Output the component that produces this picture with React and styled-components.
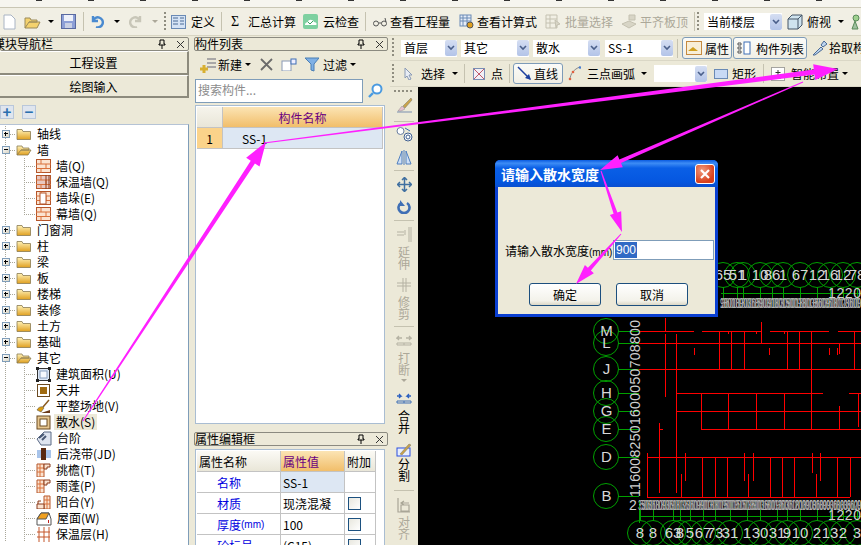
import React from 'react'
import styled, { createGlobalStyle } from 'styled-components'

const Global = createGlobalStyle`
  html, body { margin: 0; padding: 0; background: #ece9d8; }
  body { font-family: 'Noto Sans CJK SC', 'Liberation Sans', sans-serif; font-size: 12px; color: #000; }
  * { box-sizing: border-box; }
`

const Page = styled.div`
  position: relative;
  width: 861px;
  height: 545px;
  overflow: hidden;
  background: #ece9d8;
  display: flex;
  flex-direction: column;
`
const TopStrip = styled.div`
  height: 8px;
  flex: none;
  background: #f6f5ef;
  border-bottom: 1px solid #c9c6b4;
  background-image: repeating-linear-gradient(90deg, transparent 0 36px, #333 36px 42px, transparent 42px 52px);
  background-size: 100% 1px;
  background-repeat: no-repeat;
`
const MainBar = styled.div`
  height: 28px;
  flex: none;
  display: flex;
  align-items: center;
  background: #f1efe4;
  border-bottom: 1px solid #d8d5c3;
  padding-left: 3px;
  white-space: nowrap;
`
const Workspace = styled.div`
  flex: 1;
  min-height: 0;
  display: flex;
`
const Tool = styled.div`
  display: flex;
  align-items: center;
  flex: none;
  height: 22px;
  line-height: 22px;
  gap: ${(p) => p.$gap ?? 5}px;
  margin-left: ${(p) => p.$ml ?? 0}px;
  color: ${(p) => (p.$off ? '#aca899' : '#000')};
`
const Caret = styled.span`
  flex: none;
  width: 0;
  height: 0;
  border-left: 3px solid transparent;
  border-right: 3px solid transparent;
  border-top: 3px solid ${(p) => (p.$off ? '#aca899' : '#000')};
  margin-left: ${(p) => p.$ml ?? 6}px;
`
const Sep = styled.span`
  flex: none;
  width: 1px;
  height: 19px;
  background: #c5c2b0;
  margin: 0 ${(p) => p.$m ?? 7}px;
`
const Grip = styled.span`
  flex: none;
  width: 2px;
  height: 20px;
  margin: 0 ${(p) => p.$mr ?? 6}px 0 ${(p) => p.$ml ?? 3}px;
  background: repeating-linear-gradient(180deg, #8f8d80 0 2px, transparent 2px 4px);
`
const LeftDock = styled.aside`
  width: 189px;
  flex: none;
  display: flex;
  flex-direction: column;
  overflow: hidden;
  padding-top: 1px;
`
const MidDock = styled.aside`
  width: 194px;
  flex: none;
  margin-left: 5px;
  display: flex;
  flex-direction: column;
  padding-top: 1px;
`
const PaneTitle = styled.div`
  height: 14px;
  flex: none;
  display: flex;
  align-items: center;
  border: 1px solid #8b8a80;
  border-radius: 2px;
  background: #ece9d8;
  line-height: 12px;
  padding-right: 3px;
  span.t { flex: 1; white-space: nowrap; margin-left: ${(p) => p.$shift ?? 0}px; }
`
const NavButton = styled.div`
  height: ${(p) => p.$h}px;
  flex: none;
  display: flex;
  align-items: center;
  justify-content: center;
  background: #ece9d8;
  border-top: 1px solid #fff;
  border-right: 2px solid #8d8b7d;
  border-bottom: 2px solid #8d8b7d;
`
const TreeTools = styled.div`
  height: 27px;
  flex: none;
  display: flex;
  align-items: center;
  gap: 8px;
`
const Square = styled.span`
  width: 14px;
  height: 14px;
  border: 1px solid #b9c7da;
  background: #dfe5ee;
  display: flex;
  align-items: center;
  justify-content: center;
  color: #2a6fae;
  font-size: 15px;
  font-weight: 700;
  line-height: 12px;
`
const Tree = styled.div`
  flex: 1;
  background: #fff;
  border-top: 1px solid #b5c3d5;
  border-right: 1px solid #7f9db9;
  padding-top: 1px;
  overflow: hidden;
  margin-top: -1px;
`
const TreeRowWrap = styled.div`
  position: relative;
  height: 16px;
  display: flex;
  align-items: center;
  padding-left: ${(p) => (p.$child ? 36 : 16)}px;
`
const Expander = styled.span`
  position: absolute;
  left: 2px;
  top: 4px;
  width: 8px;
  height: 8px;
  border: 1px solid #7f9db9;
  background: linear-gradient(135deg, #fff, #d8d4c4);
  &::before { content: ''; position: absolute; left: 1px; top: 2px; width: 4px; height: 1px; background: #000; }
  &::after { content: ''; display: ${(p) => (p.$open ? 'none' : 'block')}; position: absolute; left: 2px; top: 1px; width: 1px; height: 4px; background: #000; }
`
const Dots = styled.span`
  position: absolute;
  left: ${(p) => p.$x}px;
  top: ${(p) => p.$top ?? 0}px;
  bottom: ${(p) => p.$bottom ?? 0}px;
  width: 1px;
  background: repeating-linear-gradient(180deg, #a9a79a 0 1px, transparent 1px 2px);
`
const DotsH = styled.span`
  position: absolute;
  left: ${(p) => p.$x}px;
  top: 8px;
  width: ${(p) => p.$w}px;
  height: 1px;
  background: repeating-linear-gradient(90deg, #a9a79a 0 1px, transparent 1px 2px);
`
const TreeLabel = styled.span`
  margin-left: 3px;
  padding: 0 2px;
  height: 16px;
  line-height: 16px;
  white-space: nowrap;
  background: ${(p) => (p.$active ? '#ece9d8' : 'transparent')};
`
const ListTools = styled.div`
  height: 27px;
  flex: none;
  display: flex;
  align-items: center;
  padding-left: 5px;
`
const SearchRow = styled.div`
  height: 27px;
  flex: none;
  display: flex;
  align-items: flex-start;
  padding: 1px 0 0 1px;
`
const SearchBox = styled.div`
  width: 168px;
  height: 24px;
  background: #fff;
  border: 1px solid #7f9db9;
  color: #8c8c8c;
  padding-left: 2px;
  line-height: 20px;
`
const GridWrap = styled.div`
  margin-left: 1px;
  width: 190px;
  height: ${(p) => p.$h}px;
  margin-top: ${(p) => p.$mt ?? 0}px;
  flex: none;
  background: #fff;
  border: 1px solid #a9bdd2;
  padding: 1px;
  overflow: hidden;
`
const GridRow = styled.div`
  display: grid;
  grid-template-columns: ${(p) => p.$cols};
  height: ${(p) => p.$h ?? 21}px;
`
const Cell = styled.div`
  display: flex;
  align-items: center;
  padding-left: ${(p) => p.$pl ?? 2}px;
  justify-content: ${(p) => (p.$center ? 'center' : 'flex-start')};
  border-right: 1px solid #c3c3c3;
  border-bottom: 1px solid #c3c3c3;
  color: ${(p) => p.$color ?? '#000'};
  background: ${(p) => p.$bg ?? 'transparent'};
  white-space: nowrap;
`
const Check = styled.span`
  width: 13px;
  height: 13px;
  border: 1px solid #1c5180;
  background: linear-gradient(135deg, #e8e7de, #fff);
`
const SplitGap = styled.div`
  height: 8px;
  flex: none;
`
const RightArea = styled.div`
  flex: 1;
  min-width: 0;
  margin-left: 2px;
  display: flex;
  flex-direction: column;
`
const SubBar = styled.div`
  height: ${(p) => p.$h}px;
  flex: none;
  display: flex;
  align-items: center;
  white-space: nowrap;
  background: #ece9d8;
  border-bottom: 1px solid #dad7c6;
`
const Combo = styled.div`
  flex: none;
  width: ${(p) => p.$w}px;
  height: 17px;
  margin-left: ${(p) => p.$ml ?? 0}px;
  background: #fff;
  display: flex;
  align-items: center;
  justify-content: space-between;
  padding-left: 3px;
  line-height: 16px;
`
const ComboArrow = styled.span`
  flex: none;
  width: 12px;
  height: 16px;
  border-radius: 2px;
  background: linear-gradient(180deg, #d5def2, #b3c4e8);
  display: flex;
  align-items: center;
  justify-content: center;
  svg { display: block; }
`
const OutlineBtn = styled.div`
  flex: none;
  height: ${(p) => p.$h ?? 22}px;
  width: ${(p) => p.$w}px;
  margin-left: ${(p) => p.$ml ?? 0}px;
  border: 1px solid #7d9bb8;
  border-radius: 3px;
  background: linear-gradient(180deg, #fbfbf8, #f1efe6);
  display: flex;
  align-items: center;
  gap: ${(p) => p.$gap ?? 3}px;
  padding-left: 3px;
`
const CanvasRow = styled.div`
  flex: 1;
  min-height: 0;
  display: flex;
`
const SideBar = styled.div`
  width: 28px;
  flex: none;
  display: flex;
  flex-direction: column;
  align-items: center;
  padding-top: 3px;
  background: #ece9d8;
  overflow: hidden;
`
const SideDots = styled.span`
  width: 20px;
  height: 2px;
  flex: none;
  margin-bottom: 5px;
  background: repeating-linear-gradient(90deg, #8f8d80 0 2px, transparent 2px 4px);
`
const SideSep = styled.span`
  width: 20px;
  height: 1px;
  flex: none;
  background: #c5c2b0;
  margin: ${(p) => p.$t ?? 8}px 0 ${(p) => p.$b ?? 4}px;
`
const SideIcon = styled.div`
  flex: none;
  height: ${(p) => p.$h ?? 16}px;
  margin-top: ${(p) => p.$mt ?? 0}px;
  display: flex;
  align-items: center;
  justify-content: center;
`
const SideText = styled.div`
  flex: none;
  width: 12px;
  font-size: 12px;
  line-height: 11.5px;
  text-align: center;
  margin-top: ${(p) => p.$mt ?? 2}px;
  color: ${(p) => (p.$off ? '#aca899' : '#000')};
`
const SideCaret = styled(Caret)`
  margin-top: 4px;
`
const Canvas = styled.main`
  position: relative;
  flex: 1;
  min-width: 0;
  background: #000;
  overflow: hidden;
  svg.cad { display: block; }
`
const Dialog = styled.div`
  position: absolute;
  left: 77px;
  top: 73px;
  width: 223px;
  height: 157px;
  background: #0a3fd1;
  border-radius: 5px 5px 0 0;
  padding: 0 3px 3px;
  display: flex;
  flex-direction: column;
`
const DialogTitle = styled.div`
  height: 27px;
  flex: none;
  margin: 0 -3px;
  padding: 0 3px 0 6px;
  border-radius: 5px 5px 0 0;
  background: linear-gradient(180deg, #0a5be0 0%, #3d8cf5 12%, #0a5fe6 30%, #0557e0 80%, #0a4fd0 100%);
  display: flex;
  align-items: center;
  justify-content: space-between;
  color: #fff;
  font-weight: 700;
  font-size: 14px;
`
const CloseBtn = styled.span`
  width: 20px;
  height: 20px;
  border: 1px solid #fff;
  border-radius: 3px;
  background: radial-gradient(circle at 35% 30%, #f09a7d, #d8401c 70%);
  display: flex;
  align-items: center;
  justify-content: center;
`
const DialogBody = styled.div`
  flex: 1;
  background: #ece9d8;
  display: flex;
  flex-direction: column;
  padding: 53px 1px 0 7px;
`
const FieldRow = styled.div`
  display: flex;
  align-items: center;
  height: 20px;
  justify-content: space-between;
  white-space: nowrap;
`
const Unit = styled.span`
  font-family: 'Liberation Sans', sans-serif;
  font-size: 10px;
`
const FieldInput = styled.div`
  width: 101px;
  flex: none;
  height: 20px;
  background: #fff;
  border: 1px solid #7f9db9;
  padding: 1px;
  display: flex;
`
const Selected = styled.span`
  background: #316ac5;
  color: #fff;
  line-height: 16px;
  padding: 0 1px;
  font-family: 'Liberation Sans', sans-serif;
`
const DialogActions = styled.div`
  display: flex;
  justify-content: center;
  gap: 15px;
  margin-top: 23px;
  padding-right: 2px;
`
const PushBtn = styled.div`
  width: 72px;
  height: 23px;
  border: 1px solid #1c4f7e;
  border-radius: 3px;
  background: linear-gradient(180deg, #fff, #f3f2ea 80%, #dcd8c6);
  display: flex;
  align-items: center;
  justify-content: center;
`
const Overlay = styled.svg`
  position: absolute;
  left: 0;
  top: 0;
  width: 861px;
  height: 545px;
  pointer-events: none;
`

const Ico = ({ w = 16, h = 16, children }) => (
  <svg width={w} height={h} viewBox={`0 0 ${w} ${h}`} style={{ flex: 'none', display: 'block' }}>
    {children}
  </svg>
)

const Folder = ({ open }) => (
  <Ico h={14}>
    <defs>
      <linearGradient id='fld' x1='0' y1='0' x2='0' y2='1'>
        <stop offset='0' stopColor='#fff2b8' />
        <stop offset='1' stopColor='#e0a020' />
      </linearGradient>
    </defs>
    {open ? (
      <path d='M1 12V3h5l1 2h6v2H5L1 12h11l3-5H5' fill='url(#fld)' stroke='#8a7b52' strokeWidth='0.8' />
    ) : (
      <path d='M1 12.5V2.5h5l1 2h7.5v8z' fill='url(#fld)' stroke='#8a7b52' strokeWidth='0.8' />
    )}
  </Ico>
)

const Brick = ({ variant }) => (
  <Ico w={15} h={14}>
    <rect x='0.5' y='0.5' width='14' height='13' fill={variant === 'ins' ? '#e8c8c0' : '#fbe3d0'} stroke='#b5562a' />
    <path d='M0 5h15M0 9.5h15M5 1v4M10 5v4.5M5 9.5V14' stroke='#d9703a' strokeWidth='1' />
    {variant === 'pier' && <rect x='4' y='2' width='6' height='11' fill='#fff' stroke='#b5562a' />}
    {variant === 'ins' && <path d='M10 0v14M13 0v14' stroke='#8a3a1a' />}
  </Ico>
)

const OtherIcon = ({ kind }) => {
  if (kind === 'area')
    return (
      <Ico w={15} h={15}>
        <rect x='1.5' y='1.5' width='12' height='12' fill='#dbe6f5' stroke='#333' />
        <rect x='4' y='4' width='7' height='7' fill='#f5f8fd' stroke='#8aa0c0' />
        <path d='M0 0h3v3H0zM12 0h3v3h-3zM0 12h3v3H0zM12 12h3v3h-3z' fill='#222' />
      </Ico>
    )
  if (kind === 'well')
    return (
      <Ico w={15} h={15}>
        <rect x='1.5' y='1.5' width='12' height='12' fill='#fff' stroke='#6b4a20' />
        <rect x='4' y='4' width='7' height='7' fill='#a06a10' />
      </Ico>
    )
  if (kind === 'site')
    return (
      <Ico w={15} h={15}>
        <path d='M13 1L7 8' stroke='#8a5a20' strokeWidth='1.5' />
        <path d='M1 11c2-4 6-4 7-2l-3 4z' fill='#d99a10' stroke='#444' strokeWidth='0.5' />
        <path d='M5 14l9-3v3z' fill='#6b3a1a' />
      </Ico>
    )
  if (kind === 'apron')
    return (
      <Ico w={15} h={15}>
        <rect x='1' y='1' width='13' height='13' fill='#e6c690' stroke='#6b4a20' />
        <rect x='4' y='4' width='7' height='7' fill='#fff' stroke='#6b4a20' />
      </Ico>
    )
  if (kind === 'step')
    return (
      <Ico w={16} h={15}>
        <path d='M1 8l7-7h7v13H5z' fill='#dfe5f0' stroke='#5a6a85' />
        <path d='M3 7l5-4M6 9l4-4' stroke='#4a5a75' strokeWidth='2' />
      </Ico>
    )
  if (kind === 'post')
    return (
      <Ico w={16} h={14}>
        <rect x='1' y='3' width='14' height='8' fill='#a8c4ea' />
        <rect x='5' y='1' width='5' height='12' fill='#5a2a12' />
      </Ico>
    )
  if (kind === 'eave' || kind === 'canopy')
    return (
      <Ico w={15} h={14}>
        <path d='M1 1h7v13H1z' fill='#fbe3d0' stroke='#b5562a' />
        <path d='M1 5h7M1 9h7M4 1v13' stroke='#d9703a' />
        <path d='M8 1h6v3h-3v2H8z' fill='#fbe3d0' stroke='#8a3a1a' />
      </Ico>
    )
  if (kind === 'balcony')
    return (
      <Ico w={15} h={14}>
        <path d='M8 1h6v13H8z' fill='#fbe3d0' stroke='#b5562a' />
        <path d='M8 5h6M8 9h6M11 1v13' stroke='#d9703a' />
        <path d='M1 9h7v5H1z M2 9V6h3' fill='#fbe3d0' stroke='#8a3a1a' />
      </Ico>
    )
  if (kind === 'roof')
    return (
      <Ico w={16} h={15}>
        <path d='M1 8l4-6h8l2 6v6H1z' fill='#fff' stroke='#555' />
        <path d='M1 8l4-6h8l-3 6z' fill='#f0a020' stroke='#555' />
        <rect x='12' y='9' width='1' height='3' fill='#c02020' />
      </Ico>
    )
  return (
    <Ico w={15} h={15}>
      <path d='M3 0v15M8 0v15M13 0v15M1 5h13M1 10h13' stroke='#c4562a' strokeWidth='1' fill='none' />
    </Ico>
  )
}

const TREE = [
  { label: '轴线' },
  { label: '墙', open: true, first: true },
  { label: '墙(Q)', child: 'wall' },
  { label: '保温墙(Q)', child: 'ins' },
  { label: '墙垛(E)', child: 'pier' },
  { label: '幕墙(Q)', child: 'wall', last: true },
  { label: '门窗洞' },
  { label: '柱' },
  { label: '梁' },
  { label: '板' },
  { label: '楼梯' },
  { label: '装修' },
  { label: '土方' },
  { label: '基础' },
  { label: '其它', open: true },
  { label: '建筑面积(U)', other: 'area' },
  { label: '天井', other: 'well' },
  { label: '平整场地(V)', other: 'site' },
  { label: '散水(S)', other: 'apron', active: true },
  { label: '台阶', other: 'step' },
  { label: '后浇带(JD)', other: 'post' },
  { label: '挑檐(T)', other: 'eave' },
  { label: '雨蓬(P)', other: 'canopy' },
  { label: '阳台(Y)', other: 'balcony' },
  { label: '屋面(W)', other: 'roof' },
  { label: '保温层(H)', other: 'layer' },
]

const TreeRow = ({ item }) => {
  const isChild = item.child || item.other
  return (
    <TreeRowWrap $child={isChild}>
      <Dots $x={5} />
      {isChild && <Dots $x={24} $bottom={item.last ? 8 : 0} />}
      {isChild ? <DotsH $x={24} $w={11} /> : <DotsH $x={10} $w={6} />}
      {!isChild && <Expander $open={item.open} />}
      {item.child && <Brick variant={item.child} />}
      {item.other && <OtherIcon kind={item.other} />}
      {!isChild && <Folder open={item.open} />}
      <TreeLabel $active={item.active}>{item.label}</TreeLabel>
    </TreeRowWrap>
  )
}

const Pin = () => (
  <Ico w={8} h={10}>
    <path d='M2 1h4v4h1v1H1V5h1zM4 6v4' fill='none' stroke='#000' />
  </Ico>
)
const CloseX = () => (
  <Ico w={9} h={9}>
    <path d='M1 1l7 7M8 1L1 8' stroke='#333' />
  </Ico>
)
const PaneHead = ({ title, shift }) => (
  <PaneTitle $shift={shift}>
    <span className='t'>{title}</span>
    <Pin />
    <span style={{ width: 10 }} />
    <CloseX />
  </PaneTitle>
)

const Arrow = () => (
  <svg width='8' height='6' viewBox='0 0 8 6'>
    <path d='M1 1l3 3 3-3' fill='none' stroke='#4a5f8a' strokeWidth='1.6' />
  </svg>
)
const ComboBox = ({ w, ml, children }) => (
  <Combo $w={w} $ml={ml}>
    <span>{children}</span>
    <ComboArrow><Arrow /></ComboArrow>
  </Combo>
)

const PROP_COLS = '84px 64px 31px 1fr'
const PROPS = [
  { name: '名称', value: 'SS-1', sel: true },
  { name: '材质', value: '现浇混凝', check: true },
  { name: <>厚度<Unit>(mm)</Unit></>, key: 'thick', value: '100', check: true },
  { name: '砼标号', value: '(C15)', check: true },
]

// taper from a hairline tail to a thick shaft and a solid head
const arrowPoints = (x1, y1, x2, y2, shaft = 5, head = 16, len = 24) => {
  const d = Math.hypot(x2 - x1, y2 - y1)
  const ux = (x2 - x1) / d
  const uy = (y2 - y1) / d
  const nx = -uy
  const ny = ux
  const bx = x2 - ux * len
  const by = y2 - uy * len
  const p = (x, y, s) => `${x + nx * s},${y + ny * s}`
  return [
    p(x1, y1, 0.5),
    p(bx, by, shaft / 2),
    p(bx, by, head / 2),
    `${x2},${y2}`,
    p(bx, by, -head / 2),
    p(bx, by, -shaft / 2),
    p(x1, y1, -0.5),
  ].join(' ')
}

const RED = [
  [639, 331, 694, 331], [702, 331, 762, 331], [770, 331, 829, 331], [838, 331, 861, 331],
  [639, 343, 861, 343], [639, 369, 861, 369], [677, 393, 823, 393], [849, 393, 861, 393],
  [677, 411, 861, 411], [701, 429, 861, 429], [647, 457, 861, 457], [647, 497, 850, 497],
  [659, 429, 663, 429],
  [665, 318, 665, 331], [665, 334, 665, 397], [676, 334, 676, 493],
  [719, 331, 719, 369], [731, 331, 731, 369], [744, 331, 744, 369], [787, 331, 787, 369],
  [799, 331, 799, 369], [811, 331, 811, 429], [854, 331, 854, 369], [761, 322, 761, 343],
  [728, 331, 728, 334], [756, 331, 756, 334], [784, 331, 784, 334],
  [694, 348, 694, 355], [769, 348, 769, 355], [829, 348, 829, 355], [837, 348, 837, 355], [839, 344, 839, 354],
  [701, 393, 701, 429], [728, 393, 728, 429], [756, 393, 756, 429], [784, 393, 784, 429],
  [839, 406, 839, 429], [858, 393, 858, 427], [659, 423, 659, 493],
  [647, 453, 647, 497], [685, 453, 685, 481], [681, 474, 681, 497], [702, 457, 702, 497],
  [715, 457, 715, 497], [727, 457, 727, 497], [744, 453, 744, 481], [748, 474, 748, 497],
  [753, 453, 753, 481], [770, 457, 770, 497], [782, 457, 782, 497], [794, 457, 794, 497],
  [812, 453, 812, 473], [816, 474, 816, 497], [820, 453, 820, 481], [837, 457, 837, 497], [850, 457, 850, 497],
]

const AXES = [
  ['M', 331], ['L', 343], ['J', 369], ['H', 393], ['G', 411], ['E', 429], ['D', 457], ['B', 496],
]
const TOP_AXES = [
  [723, '65'], [737, '51'], [743, '1'], [760, '10'], [772, '86'], [783, '1'], [800, '67'],
  [817, '12'], [830, '16'], [843, '12'], [857, '78'],
]
const BOTTOM_AXES = [
  [640, '8'], [653, '8'], [673, '63'], [680, '8'], [690, '5'], [703, '67'], [715, '73'], [730, '31'], [747, '1'],
  [760, '30'], [777, '31'], [787, '9'], [800, '10'], [817, '2'], [830, '13'], [843, '2'], [857, '3'],
]
const MONO = "'Liberation Sans', sans-serif"

const CadDrawing = () => (
  <svg className='cad' width='443' height='458' viewBox='418 87 443 458'>
    {/* green axis lines */}
    <g stroke='#00a000' strokeWidth='1' fill='none' shapeRendering='crispEdges'>
      <path d='M720.5 293.5H861M639 516.5H861M639.5 500V523' />
      {TOP_AXES.map(([x]) => <path key={x} d={`M${x}.5 287V300`} />)}
      {BOTTOM_AXES.map(([x]) => <path key={x} d={`M${x}.5 510V521`} />)}
      {AXES.map(([, y]) => <path key={y} d={`M618 ${y}.5H639`} />)}
    </g>
    <g stroke='#00a000' strokeWidth='1' fill='none'>
      {AXES.map(([n, y]) => <circle key={n} cx='606' cy={y} r='12.5' />)}
      {TOP_AXES.map(([x]) => <circle key={x} cx={x} cy='275' r='12.5' />)}
      {BOTTOM_AXES.map(([x]) => <circle key={x} cx={x} cy='533' r='12.5' />)}
    </g>
    <g fill='#ff0000'>
      {RED.map((l) => (
        <rect key={l.join()} x={l[0]} y={l[1]} width={Math.max(l[2] - l[0], 1)} height={Math.max(l[3] - l[1], 1)} />
      ))}
    </g>
    <g fill='#d8d8d8' fontFamily={MONO} fontSize='15' textAnchor='middle'>
      {AXES.map(([n, y]) => <text key={n} x='606.5' y={y + 5}>{n}</text>)}
      {TOP_AXES.map(([x, t]) => <text key={x} x={x} y='280'>{t}</text>)}
      {BOTTOM_AXES.map(([x, t]) => <text key={x} x={x} y='538'>{t}</text>)}
    </g>
    <g fontFamily={MONO} fill='#d0d0d0'>
      <text x='828' y='298' fontSize='14' textLength='33'>1220</text>
      <text x='828' y='520' fontSize='14' textLength='33'>1220</text>
      <text x='629' y='510' fontSize='14'>2</text>
    </g>
    <g fontFamily={MONO} fill='#b0b0b0' fontSize='14'>
      <text x='720' y='308' textLength='141' lengthAdjust='spacingAndGlyphs'>900180036090018009001800360018003600</text>
      <text x='720' y='308' textLength='139' lengthAdjust='spacingAndGlyphs'>180009001800300015009001800360012000</text>
      <text x='722' y='308' textLength='139' lengthAdjust='spacingAndGlyphs'>360018001500900300018003600900120009</text>
      <text x='638' y='510' textLength='223' lengthAdjust='spacingAndGlyphs'>3503600900180036009001800300015009001800360012000180090018003600</text>
      <text x='640' y='510' textLength='221' lengthAdjust='spacingAndGlyphs'>5060018009003600180030009001500180036001200018009001800360036009</text>
      <text x='642' y='510' textLength='219' lengthAdjust='spacingAndGlyphs'>9001800360012000900180015003000360018009003600180036009001800120</text>
    </g>
    <text x='640' y='497' transform='rotate(-90 640 497)' fontFamily={MONO} fill='#cfcfcf' fontSize='14' textLength='177'>
      1160082501600050708800
    </text>
  </svg>
)

const SideIconArt = ({ kind }) => {
  switch (kind) {
    case 'brush':
      return (
        <Ico w={17} h={16}>
          <path d='M15 1L7 9l2 2 7-8z' fill='#c9a24a' stroke='#776' strokeWidth='0.5' />
          <path d='M6 9l3 3-4 2H2z' fill='#e8c0d0' stroke='#888' strokeWidth='0.5' />
          <path d='M1 15h15' stroke='#7a8fb0' />
        </Ico>
      )
    case 'copy':
      return (
        <Ico w={17} h={16}>
          <circle cx='4.5' cy='5' r='3.5' fill='#fff' stroke='#6a7f9f' />
          <circle cx='12' cy='11' r='4' fill='#fff' stroke='#3f5f8f' />
          <circle cx='12' cy='11' r='2' fill='none' stroke='#3f5f8f' />
          <path d='M9 2l5 3' stroke='#3f6fae' />
        </Ico>
      )
    case 'mirror':
      return (
        <Ico w={16} h={15}>
          <path d='M1 14L6 1v13zM15 14L10 1v13z' fill='#cfe0f5' stroke='#4f7fbf' />
          <path d='M8 0v15' stroke='#4f7fbf' />
        </Ico>
      )
    case 'move':
      return (
        <Ico w={15} h={15}>
          <path d='M7.5 1v13M1 7.5h13M5 3l2.5-2.5L10 3M5 12l2.5 2.5L10 12M3 5L.5 7.5 3 10M12 5l2.5 2.5L12 10' fill='none' stroke='#3f6fa0' strokeWidth='1.5' />
        </Ico>
      )
    case 'rotate':
      return (
        <Ico w={14} h={14}>
          <path d='M4 3a5.5 5.5 0 1 0 6 0' fill='none' stroke='#3f6fb5' strokeWidth='2.6' />
          <path d='M3 0v6h5z' fill='#3f6fb5' />
        </Ico>
      )
    case 'extend':
      return (
        <Ico w={16} h={16}>
          <path d='M1 6h7M1 9h7M9 4v5M13 1v15M15 1v15' stroke='#b5b2a3' fill='none' />
        </Ico>
      )
    case 'trim':
      return (
        <Ico w={16} h={14}>
          <path d='M1 5h14M1 8h14M7 0v14M10 0v14' stroke='#b5b2a3' fill='none' />
        </Ico>
      )
    case 'break':
    case 'merge':
      return (
        <Ico w={16} h={11}>
          <path d='M1 8h14v2H1zM8 8v2' fill='none' stroke={kind === 'merge' ? '#3f6fb5' : '#b5b2a3'} />
          <path d={kind === 'merge' ? 'M1 3h4l-2-2m2 2l-2 2M15 3h-4l2-2m-2 2l2 2' : 'M6 3H1l2-2M1 3l2 2M10 3h5l-2-2m2 2l-2 2'} fill='none' stroke={kind === 'merge' ? '#2a5fc0' : '#b5b2a3'} strokeWidth='1.3' />
        </Ico>
      )
    case 'split':
      return (
        <Ico w={16} h={15}>
          <rect x='1' y='6' width='13' height='8' fill='#e8eefb' stroke='#2a4fe0' />
          <path d='M4 12L13 2l2 1-9 10z' fill='#c9a24a' stroke='#776' strokeWidth='0.5' />
        </Ico>
      )
    default:
      return (
        <Ico w={16} h={16}>
          <path d='M2 1v14h12M5 8h8v6H5zM8 4l-3 2 3 2M5 6h8' fill='none' stroke='#a9a697' strokeWidth='1.2' />
        </Ico>
      )
  }
}

export default function App() {
  return (
    <Page>
      <Global />
      <TopStrip />
      <MainBar>
        <Tool>
          <Ico h={16} w={13}><path d='M1 1h7l4 4v10H1z' fill='#fff' stroke='#a9b4c4' /></Ico>
        </Tool>
        <Tool $ml={8}>
          <Ico h={14} w={17}><path d='M1 13V3h5l1 2h6v2H5l-4 6h12l3-6H5' fill='#f4d26e' stroke='#9a8a5a' /></Ico>
          <Caret $ml={2} />
        </Tool>
        <Tool $ml={7}>
          <Ico h={15} w={15}>
            <rect x='0.5' y='0.5' width='14' height='14' fill='#8d9fd6' stroke='#5a6aa0' />
            <rect x='3' y='1' width='9' height='6' fill='#eef1fa' />
            <rect x='4' y='9' width='7' height='5' fill='#c9d0e4' />
          </Ico>
        </Tool>
        <Sep $m={7} />
        <Tool>
          <Ico w={13} h={13}><path d='M2 1v5h5M2 6a5 5 0 1 1 3 6' fill='none' stroke='#4a8ad0' strokeWidth='2.4' /></Ico>
          <Caret $ml={5} />
        </Tool>
        <Tool $ml={9} $off>
          <Ico w={13} h={13}><path d='M11 1v5H6M11 6a5 5 0 1 0-3 6' fill='none' stroke='#c8c6b8' strokeWidth='2.4' /></Ico>
          <Caret $off $ml={5} />
        </Tool>
        <Grip $ml={6} $mr={5} />
        <Tool $gap={5}>
          <Ico w={15} h={14}>
            <rect x='0.5' y='0.5' width='14' height='13' fill='#d5e3f5' stroke='#6a8ab5' />
            <path d='M2 3h5M2 6h5M2 9h5M9 3h4M9 6h4M9 9h4' stroke='#4a6a95' />
          </Ico>
          定义
        </Tool>
        <Sep $m={6} />
        <Tool $gap={8} $ml={3}>
          <span style={{ width: 9, fontFamily: "'Liberation Serif', serif", fontSize: 14, lineHeight: '14px' }}>Σ</span>
          汇总计算
        </Tool>
        <Tool $ml={7} $gap={5}>
          <Ico h={15} w={15}>
            <rect width='15' height='15' rx='2' fill='#7ed0a0' />
            <path d='M2 11c0-3 3-3 3-3 0-3 5-3 6 0 3 0 3 3 2 3z' fill='#fff' />
            <path d='M5 8l2 2 3-3' stroke='#3aa060' fill='none' />
          </Ico>
          云检查
        </Tool>
        <Sep $m={6} />
        <Tool $gap={3} $ml={1}>
          <Ico w={14} h={10}>
            <circle cx='3' cy='6.5' r='2.5' fill='none' stroke='#555' />
            <circle cx='11' cy='6.5' r='2.5' fill='none' stroke='#555' />
            <path d='M5.5 6h3M13 5l-1-4' stroke='#555' fill='none' />
          </Ico>
          查看工程量
        </Tool>
        <Tool $ml={9} $gap={2}>
          <Ico>
            <rect x='1' y='1' width='11' height='11' fill='#e6edf8' stroke='#6a8ab5' />
            <path d='M1 4h11M1 7h11M4 1v11M8 1v11' stroke='#6a8ab5' />
            <circle cx='11' cy='11' r='3' fill='#e0a020' stroke='#555' />
          </Ico>
          查看计算式
        </Tool>
        <Tool $ml={8} $gap={4} $off>
          <Ico>
            <path d='M1 1h11v13H1zM1 5h11M1 9h11M5 1v13' fill='none' stroke='#c4c1b1' />
            <path d='M10 6l5 4-3 1-1 3z' fill='#d8d5c6' stroke='#c4c1b1' />
          </Ico>
          批量选择
        </Tool>
        <Tool $ml={8} $gap={3} $off>
          <Ico>
            <path d='M1 10l7-3 7 3-7 4zM8 1h6v5H8z' fill='#d8d5c6' stroke='#c4c1b1' />
          </Ico>
          平齐板顶
        </Tool>
        <Sep $m={6} />
        <Grip $ml={-4} $mr={5} />
        <ComboBox w={78}>当前楼层</ComboBox>
        <Tool $ml={5} $gap={4}>
          <Ico h={16}>
            <path d='M1 5l4-4h10v10l-4 4H1z' fill='#cfe3ee' stroke='#456' />
            <path d='M1 5h10v10M11 5l4-4' fill='none' stroke='#456' />
          </Ico>
          俯视
          <Caret $ml={3} />
        </Tool>
        <Tool $ml={5}>
          <Ico w={14} h={16}><circle cx='7' cy='4' r='3' fill='#9fd08f' stroke='#5a8a5a' /><path d='M3 15l3-8 3 8z' fill='#a0c0a0' stroke='#5a8a5a' /></Ico>
        </Tool>
      </MainBar>
      <Workspace>
        <LeftDock>
          <PaneHead title='模块导航栏' shift={-8} />
          <NavButton $h={24}>工程设置</NavButton>
          <NavButton $h={23}>绘图输入</NavButton>
          <TreeTools>
            <Square>+</Square>
            <Square>−</Square>
          </TreeTools>
          <Tree>
            {TREE.map((item) => <TreeRow key={item.label} item={item} />)}
          </Tree>
        </LeftDock>
        <MidDock>
          <PaneHead title='构件列表' />
          <ListTools>
            <Tool $gap={1}>
              <Ico w={18} h={18}>
                <path d='M8 3h9M8 7h9M8 11h9' stroke='#667' />
                <path d='M5 9v8M1 13h8' stroke='#d8b030' strokeWidth='3' />
              </Ico>
              新建
              <Caret $ml={2} />
            </Tool>
            <Tool $ml={9}>
              <Ico w={13} h={13}><path d='M1 1l11 11M12 1L1 12' stroke='#6b6b6b' strokeWidth='1.8' /></Ico>
            </Tool>
            <Tool $ml={8}>
              <Ico h={13}><rect x='1' y='3' width='9' height='10' fill='#fff' stroke='#8a9ab5' /><rect x='10' y='1' width='5' height='5' fill='#eef' stroke='#3f6fb5' /></Ico>
            </Tool>
            <Tool $ml={8} $gap={4}>
              <Ico w={14} h={15}><path d='M0 1h14L9 7v7l-3-1V7z' fill='#7fb0e5' stroke='#4a7fb5' /></Ico>
              过滤
              <Caret $ml={-1} />
            </Tool>
          </ListTools>
          <SearchRow>
            <SearchBox>搜索构件...</SearchBox>
            <Tool $ml={5}>
              <Ico h={15} w={15}><circle cx='9' cy='6' r='4.5' fill='#fff' stroke='#4a9ae0' strokeWidth='2' /><path d='M5 10l-4 4' stroke='#4a9ae0' strokeWidth='2.4' /></Ico>
            </Tool>
          </SearchRow>
          <GridWrap $h={319}>
            <GridRow $cols='26px 1fr' $h={21}>
              <Cell $bg='linear-gradient(180deg, #f6f4ec, #e9e6d8)' />
              <Cell $center $pl={0} $color='#6a0080' $bg='linear-gradient(180deg, #fbe4b4, #f1be6a)'>构件名称</Cell>
            </GridRow>
            <GridRow $cols='26px 1fr' $h={21}>
              <Cell $center $pl={0} $bg='#fbd38a'>1</Cell>
              <Cell $pl={19} $bg='#dde7f3'>SS-1</Cell>
            </GridRow>
          </GridWrap>
          <SplitGap />
          <PaneHead title='属性编辑框' />
          <GridWrap $h={99} $mt={3}>
            <GridRow $cols={PROP_COLS} $h={21}>
              <Cell $bg='linear-gradient(180deg, #fbfaf5, #e9e6d8)'>属性名称</Cell>
              <Cell $color='#6a0080' $bg='linear-gradient(180deg, #fbe4b4, #f1be6a)'>属性值</Cell>
              <Cell $bg='linear-gradient(180deg, #fbfaf5, #e9e6d8)'>附加</Cell>
            </GridRow>
            {PROPS.map((r) => (
              <GridRow key={r.key ?? r.name} $cols={PROP_COLS} $h={21}>
                <Cell $pl={20} $color='#0000e0'>{r.name}</Cell>
                <Cell $bg={r.sel ? '#dde7f3' : 'transparent'}>{r.value}</Cell>
                <Cell $pl={3}>{r.check && <Check />}</Cell>
              </GridRow>
            ))}
          </GridWrap>
        </MidDock>
        <RightArea>
          <SubBar $h={25}>
            <Grip $ml={2} $mr={7} />
            <ComboBox w={56}>首层</ComboBox>
            <ComboBox w={68} ml={4}>其它</ComboBox>
            <ComboBox w={67} ml={4}>散水</ComboBox>
            <ComboBox w={68} ml={5}>SS-1</ComboBox>
            <Sep $m={4} />
            <OutlineBtn $w={50}>
              <Ico h={14}><rect x='0.5' y='0.5' width='15' height='13' fill='#f8efd8' stroke='#c58a40' /><path d='M2 10l5-4 5 4z' fill='#d0a020' /></Ico>
              属性
            </OutlineBtn>
            <OutlineBtn $w={74} $ml={1} $gap={5}>
              <Ico w={14} h={14}><path d='M1 2h3v2H1zM1 6h3v2H1zM1 10h3v2H1z' fill='#fff' stroke='#555' /><rect x='7' y='1' width='6' height='12' fill='#fff' stroke='#3f6fb5' /></Ico>
              构件列表
            </OutlineBtn>
            <Tool $ml={5} $gap={2}>
              <Ico w={15} h={16}><path d='M1 15l8-8 2 2-8 6zM9 5l3-4 3 3-4 3z' fill='#bcd4ee' stroke='#4a6a95' /></Ico>
              拾取构件
            </Tool>
          </SubBar>
          <SubBar $h={26}>
            <Grip $ml={2} $mr={10} />
            <Tool $gap={8}>
              <Ico w={9} h={13}><path d='M1 1v10l2-2 2 4 2-1-2-4h3z' fill='#e8edf5' stroke='#8a9ab5' /></Ico>
              选择
              <Caret $ml={-1} />
            </Tool>
            <Sep $m={6} />
            <Tool $gap={6} $ml={2}>
              <Ico w={12} h={12}>
                <rect x='0.5' y='0.5' width='11' height='11' fill='#f2f0f6' stroke='#7a8fb5' />
                <path d='M1 1l10 10M11 1L1 11' stroke='#c05a6a' />
              </Ico>
              点
            </Tool>
            <Sep $m={6} />
            <OutlineBtn $w={50} $h={21} $ml={-3} $gap={2}>
              <Ico w={15} h={15}><path d='M1 1l12 12' stroke='#1c3f9f' strokeWidth='1.5' /><path d='M14 14l-6-2 4-4z' fill='#1c3f9f' /></Ico>
              直线
            </OutlineBtn>
            <Tool $ml={5} $gap={6}>
              <Ico w={13} h={15}><path d='M2 14C2 8 6 3 12 1' fill='none' stroke='#888' /><circle cx='2' cy='13' r='1.3' fill='#e06040' /><circle cx='5' cy='6' r='1.3' fill='#e06040' /><circle cx='12' cy='1.5' r='1.3' fill='#4a7fd0' /></Ico>
              三点画弧
              <Caret $ml={0} />
            </Tool>
            <ComboBox w={53} ml={7} />
            <Tool $ml={7} $gap={4}>
              <Ico w={14} h={10}><rect x='0.5' y='0.5' width='13' height='9' fill='#c8daf5' stroke='#6a8ab5' /></Ico>
              矩形
            </Tool>
            <Sep $m={7} />
            <Tool $gap={6}>
              <Ico h={14} w={14}>
                <rect x='0.5' y='0.5' width='13' height='13' fill='#fff' stroke='#555' strokeDasharray='1 1' />
                <path d='M7 3v5M4.5 5.5h5M4 11h6' stroke='#333' />
              </Ico>
              智能布置
              <Caret $ml={-3} />
            </Tool>
          </SubBar>
          <CanvasRow>
            <SideBar>
              <SideDots />
              <SideIcon $h={16}><SideIconArt kind='brush' /></SideIcon>
              <SideSep $t={8} $b={4} />
              <SideIcon $h={16}><SideIconArt kind='copy' /></SideIcon>
              <SideIcon $h={16} $mt={7}><SideIconArt kind='mirror' /></SideIcon>
              <SideSep $t={5} $b={5} />
              <SideIcon $h={16}><SideIconArt kind='move' /></SideIcon>
              <SideIcon $h={15} $mt={7}><SideIconArt kind='rotate' /></SideIcon>
              <SideSep $t={6} $b={5} />
              <SideIcon $h={16}><SideIconArt kind='extend' /></SideIcon>
              <SideText $off $mt={4}>延伸</SideText>
              <SideIcon $h={14} $mt={9}><SideIconArt kind='trim' /></SideIcon>
              <SideText $off $mt={4}>修剪</SideText>
              <SideSep $t={7} $b={8} />
              <SideIcon $h={11}><SideIconArt kind='break' /></SideIcon>
              <SideText $off $mt={6}>打断</SideText>
              <SideCaret $off $ml={0} />
              <SideIcon $h={11} $mt={11}><SideIconArt kind='merge' /></SideIcon>
              <SideText $mt={6}>合并</SideText>
              <SideIcon $h={15} $mt={9}><SideIconArt kind='split' /></SideIcon>
              <SideText $mt={1}>分割</SideText>
              <SideSep $t={9} $b={6} />
              <SideIcon $h={16}><SideIconArt kind='align' /></SideIcon>
              <SideText $off $mt={3}>对齐</SideText>
            </SideBar>
            <Canvas>
              <CadDrawing />
              <Dialog>
                <DialogTitle>
                  请输入散水宽度
                  <CloseBtn>
                    <Ico w={12} h={12}><path d='M2 2l8 8M10 2l-8 8' stroke='#fff' strokeWidth='2.2' /></Ico>
                  </CloseBtn>
                </DialogTitle>
                <DialogBody>
                  <FieldRow>
                    <span>请输入散水宽度<Unit>(mm)</Unit></span>
                    <FieldInput><Selected>900</Selected></FieldInput>
                  </FieldRow>
                  <DialogActions>
                    <PushBtn>确定</PushBtn>
                    <PushBtn>取消</PushBtn>
                  </DialogActions>
                </DialogBody>
              </Dialog>
            </Canvas>
          </CanvasRow>
        </RightArea>
      </Workspace>
      <Overlay viewBox='0 0 861 545'>
        <g fill='#ff20ff'>
          <polygon points={arrowPoints(83, 421, 266, 142)} />
          <polygon points={arrowPoints(264, 143, 838, 69)} />
          <polygon points={arrowPoints(803, 82, 600, 170, 4, 13, 22)} />
          <polygon points={arrowPoints(601, 171, 622, 232, 4, 12, 20)} />
          <polygon points={arrowPoints(621, 234, 576, 284, 4, 12, 20)} />
        </g>
      </Overlay>
    </Page>
  )
}
